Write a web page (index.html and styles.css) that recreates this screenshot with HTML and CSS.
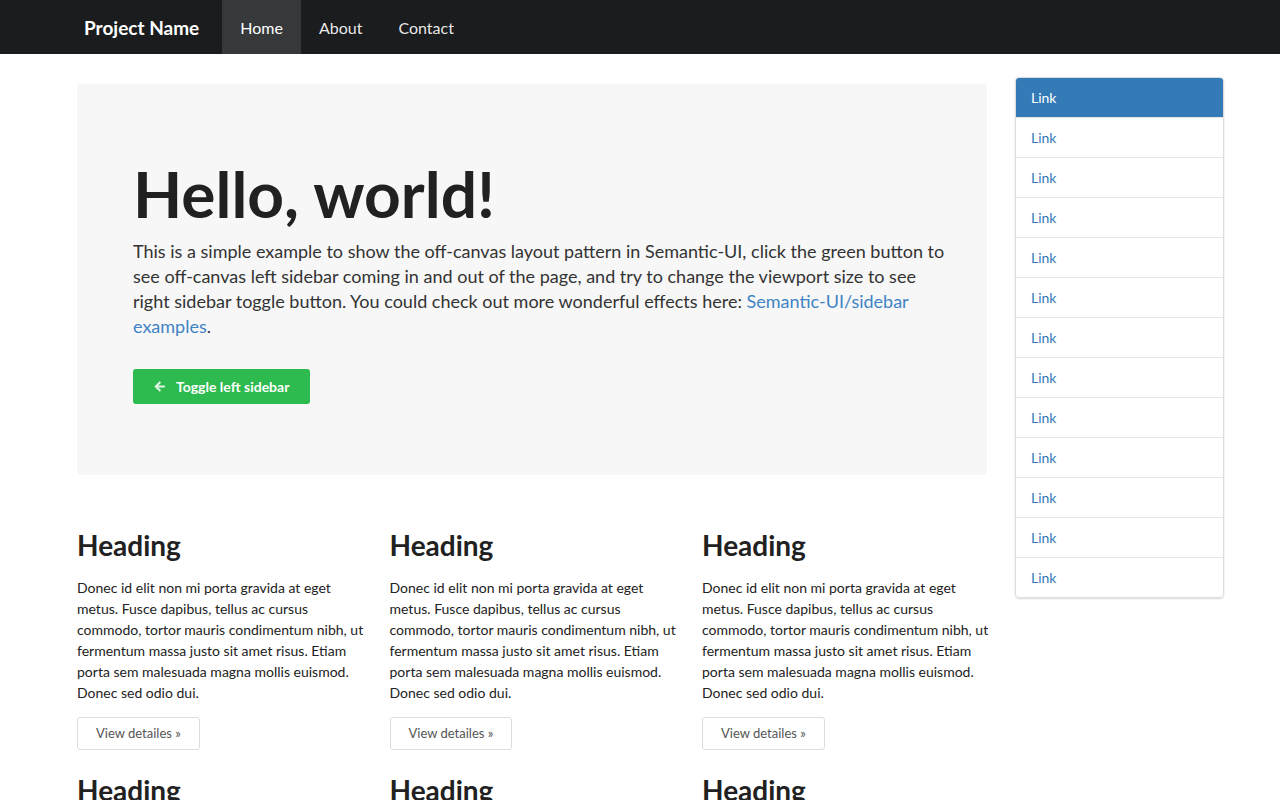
FILE: index.html
```html
<!DOCTYPE html>
<html>
<head>
    <title>Off-canvas template for Semantic-UI</title>
    <link rel="stylesheet" href="styles.css">
</head>
<body>
    <div class="navbar">
        <div class="navbar-inner">
            <a class="brand" href="#">Project Name</a>
            <a class="nav-item active" href="#">Home</a>
            <a class="nav-item" href="#about">About</a>
            <a class="nav-item" href="#contact">Contact</a>
        </div>
    </div>

    <div class="container">
        <div class="main">
            <div class="jumbotron">
                <h1>Hello, world!</h1>
                <p>This is a simple example to show the off-canvas layout pattern in Semantic-UI, click the green button to see off-canvas left sidebar coming in and out of the page, and try to change the viewport size to see right sidebar toggle button. You could check out more wonderful effects here: <a href="#">Semantic-UI/sidebar examples</a>.</p>
                <button class="toggle-btn">
                    <svg class="arrow-icon" viewBox="0 0 16 16" width="13" height="13">
                        <path d="M8.2 1.6 L1.6 8 L8.2 14.4 L10 12.6 L6.6 9.3 H14.6 V6.7 H6.6 L10 3.4 Z" fill="currentColor"/>
                    </svg>
                    Toggle left sidebar
                </button>
            </div>

            <div class="cards">
                <div class="card">
                    <h2>Heading</h2>
                    <p>Donec id elit non mi porta gravida at eget metus. Fusce dapibus, tellus ac cursus commodo, tortor mauris condimentum nibh, ut fermentum massa justo sit amet risus. Etiam porta sem malesuada magna mollis euismod. Donec sed odio dui.</p>
                    <a class="details-btn" href="#">View detailes &raquo;</a>
                </div>
                <div class="card">
                    <h2>Heading</h2>
                    <p>Donec id elit non mi porta gravida at eget metus. Fusce dapibus, tellus ac cursus commodo, tortor mauris condimentum nibh, ut fermentum massa justo sit amet risus. Etiam porta sem malesuada magna mollis euismod. Donec sed odio dui.</p>
                    <a class="details-btn" href="#">View detailes &raquo;</a>
                </div>
                <div class="card">
                    <h2>Heading</h2>
                    <p>Donec id elit non mi porta gravida at eget metus. Fusce dapibus, tellus ac cursus commodo, tortor mauris condimentum nibh, ut fermentum massa justo sit amet risus. Etiam porta sem malesuada magna mollis euismod. Donec sed odio dui.</p>
                    <a class="details-btn" href="#">View detailes &raquo;</a>
                </div>
                <div class="card">
                    <h2>Heading</h2>
                    <p>Donec id elit non mi porta gravida at eget metus. Fusce dapibus, tellus ac cursus commodo, tortor mauris condimentum nibh, ut fermentum massa justo sit amet risus. Etiam porta sem malesuada magna mollis euismod. Donec sed odio dui.</p>
                    <a class="details-btn" href="#">View detailes &raquo;</a>
                </div>
                <div class="card">
                    <h2>Heading</h2>
                    <p>Donec id elit non mi porta gravida at eget metus. Fusce dapibus, tellus ac cursus commodo, tortor mauris condimentum nibh, ut fermentum massa justo sit amet risus. Etiam porta sem malesuada magna mollis euismod. Donec sed odio dui.</p>
                    <a class="details-btn" href="#">View detailes &raquo;</a>
                </div>
                <div class="card">
                    <h2>Heading</h2>
                    <p>Donec id elit non mi porta gravida at eget metus. Fusce dapibus, tellus ac cursus commodo, tortor mauris condimentum nibh, ut fermentum massa justo sit amet risus. Etiam porta sem malesuada magna mollis euismod. Donec sed odio dui.</p>
                    <a class="details-btn" href="#">View detailes &raquo;</a>
                </div>
            </div>
        </div>

        <div class="sidebar">
            <a class="side-link active" href="#">Link</a>
            <a class="side-link" href="#">Link</a>
            <a class="side-link" href="#">Link</a>
            <a class="side-link" href="#">Link</a>
            <a class="side-link" href="#">Link</a>
            <a class="side-link" href="#">Link</a>
            <a class="side-link" href="#">Link</a>
            <a class="side-link" href="#">Link</a>
            <a class="side-link" href="#">Link</a>
            <a class="side-link" href="#">Link</a>
            <a class="side-link" href="#">Link</a>
            <a class="side-link" href="#">Link</a>
            <a class="side-link" href="#">Link</a>
        </div>
    </div>
</body>
</html>
```

FILE: styles.css
```css
body {
    margin: 0;
    font-family: Lato, 'Helvetica Neue', Arial, sans-serif;
    font-size: 14px;
    color: rgba(0,0,0,0.87);
    background: #fff;
}

a {
    text-decoration: none;
}

/* Top navbar */
.navbar {
    background: #1b1c1d;
    height: 54px;
}

.navbar-inner {
    display: flex;
    align-items: stretch;
    height: 100%;
    padding-left: 84px;
}

.brand {
    display: flex;
    align-items: center;
    color: #fff;
    font-size: 19px;
    font-weight: 700;
    padding-right: 23px;
}

.nav-item {
    display: flex;
    align-items: center;
    padding: 0 18px;
    color: rgba(255,255,255,0.92);
    font-size: 16px;
}

.nav-item.active {
    background: #37383a;
    color: #fff;
}

/* Page layout */
.container {
    display: flex;
    align-items: flex-start;
    gap: 28px;
    padding-left: 77px;
    margin-top: 23px;
}

.main {
    width: 910px;
    margin-top: 1px;
}

.jumbotron {
    background: #f7f7f7;
    border-radius: 4px;
    margin-top: 6px;
    padding: 75px 40px 71px 56px;
}

.jumbotron h1 {
    margin: 0 0 10px;
    font-size: 64px;
    font-weight: 700;
    line-height: 1.1;
    color: #212121;
}

.jumbotron p {
    margin: 0 0 30px;
    font-size: 18px;
    line-height: 25px;
    color: #333;
}

.jumbotron p a {
    color: #4183c4;
}

.toggle-btn {
    display: inline-flex;
    align-items: center;
    gap: 10px;
    height: 35px;
    padding: 0 21px 0 20px;
    border: none;
    border-radius: 3px;
    background: #2dba4e;
    color: #fff;
    font-family: inherit;
    font-size: 14px;
    font-weight: 700;
    cursor: pointer;
}

.arrow-icon {
    opacity: 0.85;
}

/* Feature cards */
.cards {
    display: grid;
    grid-template-columns: repeat(3, 290px);
    column-gap: 22.5px;
    margin-top: 50px;
}

.card {
    margin-bottom: 20px;
}

.card h2 {
    margin: 4px 0 14px;
    font-size: 28px;
    font-weight: 700;
    line-height: 1.2;
    color: #212121;
}

.card p {
    margin: 0 0 14px;
    font-size: 14px;
    line-height: 21px;
    color: #222;
}

.details-btn {
    display: inline-block;
    padding: 7px 18px;
    border: 1px solid #ddd;
    border-radius: 3px;
    color: #555;
    font-size: 13px;
    line-height: 17px;
}

/* Right sidebar */
.sidebar {
    box-sizing: border-box;
    width: 209px;
    display: flex;
    flex-direction: column;
    border: 1px solid #ddd;
    border-radius: 4px;
    box-shadow: 0 1px 2px rgba(0,0,0,0.15);
    overflow: hidden;
}

.side-link {
    display: block;
    height: 39px;
    line-height: 39px;
    padding: 0 15px;
    border-top: 1px solid #e6e6e6;
    color: #337ab7;
    font-size: 14px;
}

.side-link:first-child {
    border-top: none;
}

.side-link.active {
    background: #337ab7;
    color: #fff;
}
```
